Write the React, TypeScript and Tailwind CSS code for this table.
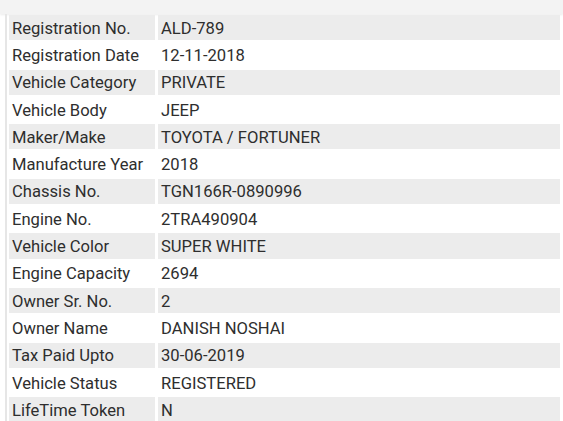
import React from "react";

const rows: [string, string][] = [
  ["Registration No.", "ALD-789"],
  ["Registration Date", "12-11-2018"],
  ["Vehicle Category", "PRIVATE"],
  ["Vehicle Body", "JEEP"],
  ["Maker/Make", "TOYOTA / FORTUNER"],
  ["Manufacture Year", "2018"],
  ["Chassis No.", "TGN166R-0890996"],
  ["Engine No.", "2TRA490904"],
  ["Vehicle Color", "SUPER WHITE"],
  ["Engine Capacity", "2694"],
  ["Owner Sr. No.", "2"],
  ["Owner Name", "DANISH NOSHAI"],
  ["Tax Paid Upto", "30-06-2019"],
  ["Vehicle Status", "REGISTERED"],
  ["LifeTime Token", "N"],
];

export default function App() {
  return (
    <div className="w-[563px] h-[421px] overflow-hidden bg-white font-['Roboto',sans-serif] text-[16.6px] text-[#2e2e2e]">
      <div className="h-[14px] bg-[#f3f3f3] shadow-[0_1px_2px_rgba(0,0,0,0.08)]" />
      <div className="ml-[5px] border-l-2 border-[#e6e6e6] pl-[2px] pr-[3px] pt-[1px] flex flex-col gap-[2px]">
        {rows.map(([label, value], i) => {
          const bg = i % 2 === 0 ? "bg-[#ececec]" : "bg-white";
          return (
            <div key={label} className="flex gap-[3px] h-[25.3px]">
              <div className={`${bg} w-[146px] shrink-0 pl-[3px] pt-[3px] flex items-center`}>{label}</div>
              <div className={`${bg} flex-1 pl-[3px] pt-[3px] flex items-center`}>{value}</div>
            </div>
          );
        })}
      </div>
    </div>
  );
}
